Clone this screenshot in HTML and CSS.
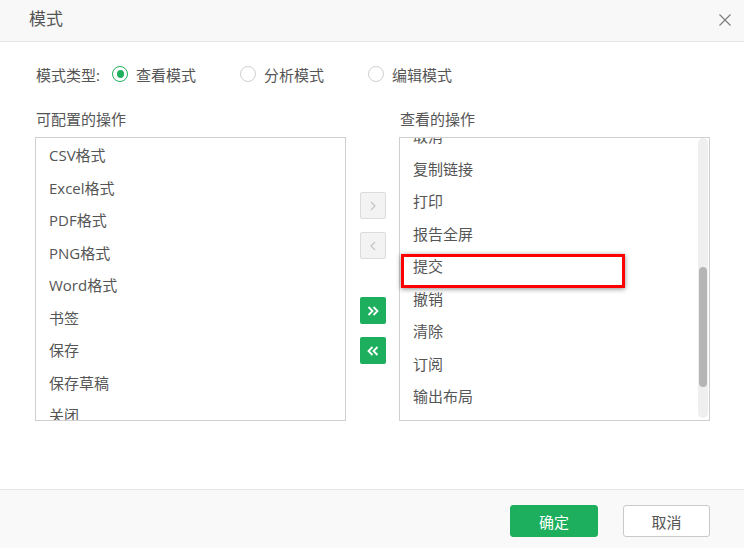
FILE: index.html
```html
<!DOCTYPE html>
<html lang="zh">
<head>
<meta charset="utf-8">
<link rel="stylesheet" href="styles.css">
</head>
<body>
<div class="dialog">
  <div class="header">
    <span class="title">模式</span>
    <svg class="close" width="12" height="12" viewBox="0 0 12 12"><path d="M0.5 0.5L11.5 11.5M11.5 0.5L0.5 11.5" stroke="#7a7a7a" stroke-width="1.1" fill="none"/></svg>
  </div>
  <div class="content">
    <div class="mode-row">
      <span class="mode-label">模式类型:</span>
      <span class="radio-item"><span class="radio checked"></span>查看模式</span>
      <span class="radio-item"><span class="radio"></span>分析模式</span>
      <span class="radio-item"><span class="radio"></span>编辑模式</span>
    </div>
    <div class="transfer">
      <div class="col">
        <div class="col-title">可配置的操作</div>
        <div class="listbox">
          <div class="list-view">
            <ul class="list left-list">
              <li>CSV格式</li>
              <li>Excel格式</li>
              <li>PDF格式</li>
              <li>PNG格式</li>
              <li>Word格式</li>
              <li>书签</li>
              <li>保存</li>
              <li>保存草稿</li>
              <li>关闭</li>
            </ul>
          </div>
        </div>
      </div>
      <div class="mid">
        <span class="tbtn gray"><svg width="8" height="10" viewBox="0 0 8 10"><path d="M2 1l4 4-4 4" stroke="#c4c4c4" stroke-width="1.2" fill="none"/></svg></span>
        <span class="tbtn gray"><svg width="8" height="10" viewBox="0 0 8 10"><path d="M6 1L2 5l4 4" stroke="#c4c4c4" stroke-width="1.2" fill="none"/></svg></span>
        <span class="tbtn green first-green"><svg width="12" height="10" viewBox="0 0 12 10"><path d="M1.5 1l4 4-4 4M6.5 1l4 4-4 4" stroke="#fff" stroke-width="1.8" fill="none"/></svg></span>
        <span class="tbtn green"><svg width="12" height="10" viewBox="0 0 12 10"><path d="M5.5 1l-4 4 4 4M10.5 1l-4 4 4 4" stroke="#fff" stroke-width="1.8" fill="none"/></svg></span>
      </div>
      <div class="col">
        <div class="col-title">查看的操作</div>
        <div class="listbox">
          <div class="list-view">
            <ul class="list right-list">
              <li>取消</li>
              <li>复制链接</li>
              <li>打印</li>
              <li>报告全屏</li>
              <li>提交</li>
              <li>撤销</li>
              <li>清除</li>
              <li>订阅</li>
              <li>输出布局</li>
              <li>导出</li>
            </ul>
          </div>
          <div class="track"><div class="thumb"></div></div>
          <div class="highlight"></div>
        </div>
      </div>
    </div>
  </div>
  <div class="footer">
    <button class="btn primary">确定</button>
    <button class="btn secondary">取消</button>
  </div>
</div>
</body>
</html>
```

FILE: styles.css
```css
* { box-sizing: border-box; }
html, body { margin: 0; padding: 0; }
body {
  font-family: "Open Sans", "Noto Sans CJK SC", sans-serif;
  color: #555;
  background: #fff;
}
.dialog {
  width: 744px;
  height: 548px;
  display: flex;
  flex-direction: column;
  background: #fff;
}
.header {
  height: 42px;
  flex: none;
  background: #f8f8f8;
  border-bottom: 1px solid #e6e6e6;
  display: flex;
  align-items: center;
  justify-content: space-between;
  padding: 0 13px 0 29px;
}
.title {
  font-size: 17px;
  color: #555;
  line-height: 20px;
  margin-top: -4px;
}
.close { margin-top: -2px; }
.content {
  flex: 1;
  padding: 0 34px 0 35px;
}
.mode-row {
  display: flex;
  align-items: center;
  height: 28px;
  margin-top: 18px;
  font-size: 15px;
  color: #555;
}
.mode-label {
  width: 77px;
  padding-left: 1px;
}
.radio-item {
  display: flex;
  align-items: center;
  width: 128px;
}
.radio {
  width: 16px;
  height: 16px;
  border: 1px solid #cfcfcf;
  border-radius: 50%;
  margin-right: 8px;
  display: flex;
  align-items: center;
  justify-content: center;
}
.radio.checked { border-color: #1daf5d; }
.radio.checked::after {
  content: "";
  width: 7px;
  height: 8px;
  border-radius: 50%;
  background: #1daf5d;
}
.transfer {
  display: flex;
  margin-top: 17px;
}
.col { width: 311px; }
.col-title {
  font-size: 15px;
  line-height: 28px;
  padding-left: 1px;
  color: #555;
  height: 32px;
}
.listbox {
  position: relative;
  height: 284px;
  border: 1px solid #cfcfcf;
  display: flex;
  background: #fff;
}
.list-view {
  flex: 1;
  overflow: hidden;
}
.list {
  list-style: none;
  margin: 0;
  padding: 0;
}
.list li {
  height: 32.5px;
  line-height: 32.5px;
  padding-left: 13px;
  font-size: 15px;
  color: #555;
  white-space: nowrap;
}
.left-list { margin-top: 1px; }
.right-list { margin-top: -18px; }
.track {
  width: 10px;
  flex: none;
  margin: 0 1px 2px 0;
  background: #efefef;
  border-radius: 5px;
  padding: 129px 1px 0;
}
.thumb {
  height: 120px;
  background: #b5b5b5;
  border-radius: 4px;
}
.highlight {
  position: absolute;
  left: 1px;
  top: 116px;
  width: 224px;
  height: 34px;
  border: 3px solid #ff0000;
  box-shadow: 0 1px 5px rgba(0,0,0,0.45);
}
.mid {
  width: 53px;
  display: flex;
  flex-direction: column;
  align-items: center;
  padding-top: 87px;
}
.tbtn {
  width: 26px;
  height: 27px;
  border-radius: 2px;
  display: flex;
  align-items: center;
  justify-content: center;
  margin-bottom: 13px;
}
.tbtn.gray {
  background: #f3f3f3;
  border: 1px solid #dcdcdc;
}
.tbtn.green { background: #1daf5d; }
.tbtn.first-green { margin-top: 25px; }
.footer {
  height: 59px;
  flex: none;
  background: #f9f9f9;
  border-top: 1px solid #e6e6e6;
  display: flex;
  justify-content: flex-end;
  padding: 15px 34px 0 0;
  gap: 25px;
}
.btn {
  width: 88px;
  height: 32px;
  border: 1px solid #c9c9c9;
  border-radius: 3px;
  background: #fff;
  font-family: "Open Sans", "Noto Sans CJK SC", sans-serif;
  font-size: 15px;
  color: #555;
  padding: 0;
}
.btn.secondary { width: 87px; }
.btn.primary {
  background: #1daf5d;
  border-color: #1daf5d;
  color: #fff;
}
```
